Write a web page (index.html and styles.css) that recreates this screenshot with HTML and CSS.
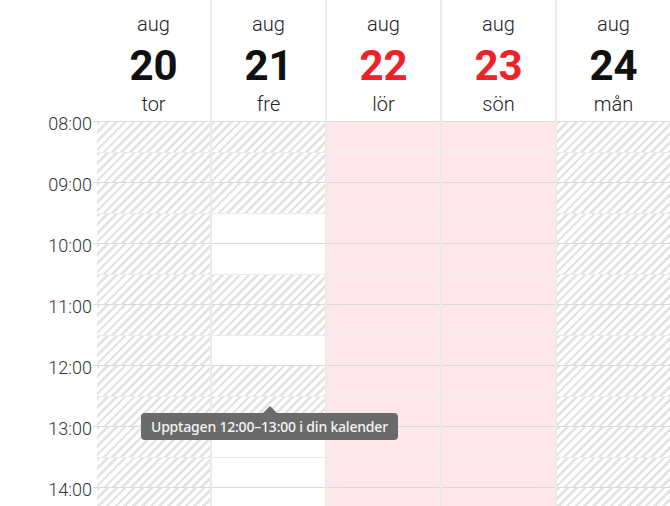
FILE: index.html
```html
<!DOCTYPE html>
<html lang="sv">
<head>
<meta charset="utf-8">
<title>Kalender</title>
<link rel="stylesheet" href="styles.css">
</head>
<body>
<div class="cal">
  <div class="timecol">
    <div class="tlabel">08:00</div>
    <div class="tlabel">09:00</div>
    <div class="tlabel">10:00</div>
    <div class="tlabel">11:00</div>
    <div class="tlabel">12:00</div>
    <div class="tlabel">13:00</div>
    <div class="tlabel">14:00</div>
  </div>

  <div class="day first">
    <div class="dayhead"><span class="mon">aug</span><span class="num">20</span><span class="wd">tor</span></div>
    <div class="slots">
      <div class="slot busy"></div><div class="slot busy hour"></div>
      <div class="slot busy"></div><div class="slot busy hour"></div>
      <div class="slot busy"></div><div class="slot busy hour"></div>
      <div class="slot busy"></div><div class="slot busy hour"></div>
      <div class="slot busy"></div><div class="slot busy hour"></div>
      <div class="slot busy"></div><div class="slot busy hour"></div>
      <div class="slot busy"></div><div class="slot busy hour"></div>
    </div>
  </div>

  <div class="day">
    <div class="dayhead"><span class="mon">aug</span><span class="num">21</span><span class="wd">fre</span></div>
    <div class="slots">
      <div class="slot busy"></div><div class="slot busy hour"></div>
      <div class="slot busy"></div><div class="slot free hour"></div>
      <div class="slot free"></div><div class="slot busy hour"></div>
      <div class="slot busy"></div><div class="slot free hour"></div>
      <div class="slot busy"></div><div class="slot busy hour"></div>
      <div class="slot free"></div><div class="slot free hour"></div>
      <div class="slot free"></div><div class="slot free hour"></div>
    </div>
  </div>

  <div class="day">
    <div class="dayhead"><span class="mon">aug</span><span class="num red">22</span><span class="wd">lör</span></div>
    <div class="slots">
      <div class="slot weekend"></div><div class="slot weekend hour"></div>
      <div class="slot weekend"></div><div class="slot weekend hour"></div>
      <div class="slot weekend"></div><div class="slot weekend hour"></div>
      <div class="slot weekend"></div><div class="slot weekend hour"></div>
      <div class="slot weekend"></div><div class="slot weekend hour"></div>
      <div class="slot weekend"></div><div class="slot weekend hour"></div>
      <div class="slot weekend"></div><div class="slot weekend hour"></div>
    </div>
  </div>

  <div class="day">
    <div class="dayhead"><span class="mon">aug</span><span class="num red">23</span><span class="wd">sön</span></div>
    <div class="slots">
      <div class="slot weekend"></div><div class="slot weekend hour"></div>
      <div class="slot weekend"></div><div class="slot weekend hour"></div>
      <div class="slot weekend"></div><div class="slot weekend hour"></div>
      <div class="slot weekend"></div><div class="slot weekend hour"></div>
      <div class="slot weekend"></div><div class="slot weekend hour"></div>
      <div class="slot weekend"></div><div class="slot weekend hour"></div>
      <div class="slot weekend"></div><div class="slot weekend hour"></div>
    </div>
  </div>

  <div class="day">
    <div class="dayhead"><span class="mon">aug</span><span class="num">24</span><span class="wd">mån</span></div>
    <div class="slots">
      <div class="slot busy"></div><div class="slot busy hour"></div>
      <div class="slot busy"></div><div class="slot busy hour"></div>
      <div class="slot busy"></div><div class="slot busy hour"></div>
      <div class="slot busy"></div><div class="slot busy hour"></div>
      <div class="slot busy"></div><div class="slot busy hour"></div>
      <div class="slot busy"></div><div class="slot busy hour"></div>
      <div class="slot busy"></div><div class="slot busy hour"></div>
    </div>
  </div>

  <div class="tooltip">Upptagen 12:00–13:00 i din kalender</div>
</div>
</body>
</html>
```

FILE: styles.css
```css
html, body {
  margin: 0;
  padding: 0;
  background: #ffffff;
  overflow: hidden;
}

body {
  width: 670px;
  height: 506px;
  font-family: Roboto, "Liberation Sans", sans-serif;
  color: #333333;
}

.cal {
  position: relative;
  display: flex;
  align-items: flex-start;
  width: 670px;
  height: 506px;
  overflow: hidden;
}

.timecol {
  width: 97px;
  flex: 0 0 97px;
  padding-top: 93px;
  box-sizing: border-box;
}

.tlabel {
  height: 61px;
  line-height: 61px;
  text-align: right;
  padding-right: 5px;
  font-size: 18px;
  font-weight: 300;
  color: #333333;
  background: linear-gradient(#dcdcdc, #dcdcdc) no-repeat right 0 top 28px / 4px 1px;
}

.day {
  flex: 1 1 0;
  min-width: 0;
  border-left: 2px solid #ebebeb;
  display: flex;
  flex-direction: column;
}

.day.first {
  border-left: none;
}

.dayhead {
  flex: none;
  height: 122px;
  box-sizing: border-box;
  border-bottom: 1px solid #dcdcdc;
  display: flex;
  flex-direction: column;
  align-items: center;
  padding-top: 12px;
}

.mon, .wd {
  font-size: 20px;
  line-height: 24px;
  font-weight: 300;
  color: #222222;
}

.num {
  font-size: 42px;
  line-height: 44px;
  font-weight: 700;
  color: #111111;
  margin-top: 8px;
  margin-bottom: 4px;
}

.num.red {
  color: #ee2229;
}

.slots {
  flex: none;
  display: flex;
  flex-direction: column;
}

.slot {
  height: 30.5px;
  flex: 0 0 30.5px;
  box-sizing: border-box;
  border-bottom: 1px solid #ececec;
}

.slot.hour {
  border-bottom-color: #d9d9d9;
}

.slot.busy {
  background: repeating-linear-gradient(135deg, #e4e4e4 0 2.6px, #ffffff 2.6px 6.2px);
}

.slot.free {
  background: #ffffff;
}

.slot.weekend {
  background: #fde7ea;
}

.tooltip {
  position: absolute;
  left: 141px;
  top: 413px;
  height: 27px;
  line-height: 27px;
  padding: 0 10px;
  background: #6a6a6a;
  color: #f4f4f4;
  border-radius: 4px;
  font-family: "Noto Sans", "Open Sans", sans-serif;
  font-size: 14px;
  font-weight: 500;
  letter-spacing: -0.2px;
  white-space: nowrap;
}

.tooltip::before {
  content: "";
  position: absolute;
  left: 122px;
  top: -7px;
  border-left: 7px solid transparent;
  border-right: 7px solid transparent;
  border-bottom: 7px solid #6a6a6a;
}
```
